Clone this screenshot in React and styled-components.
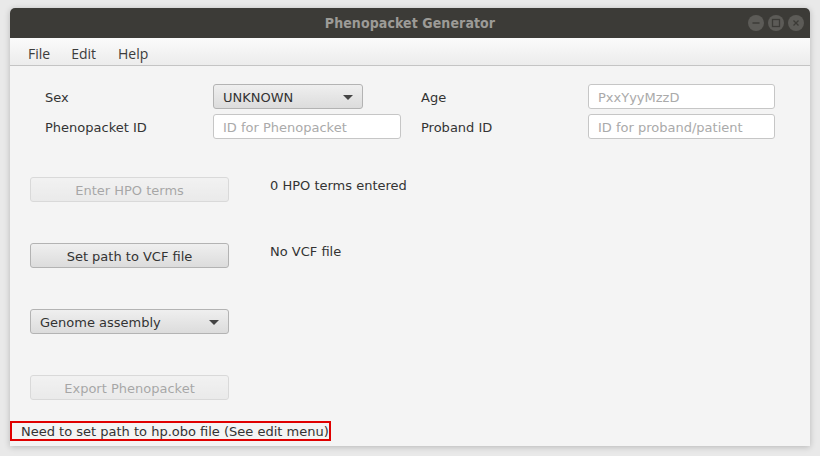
import React from "react";
import styled, { createGlobalStyle } from "styled-components";

const Global = createGlobalStyle`
  html, body { margin: 0; padding: 0; background: #e9e9e9; }
  body { width: 820px; height: 456px; overflow: hidden; font-family: "DejaVu Sans", "Noto Sans", sans-serif; }
`;

const Desktop = styled.div`
  padding: 8px 10px 0 10px;
  height: 456px;
  box-sizing: border-box;
`;

const Window = styled.div`
  width: 800px;
  height: 438px;
  display: flex;
  flex-direction: column;
  background: #f4f4f4;
  border-radius: 5px 5px 0 0;
  box-shadow: 0 1px 6px rgba(0, 0, 0, 0.22);
  overflow: hidden;
`;

const TitleBar = styled.div`
  height: 30px;
  flex: none;
  background: #3c3b37;
  position: relative;
  display: flex;
  align-items: center;
  justify-content: center;
`;

const Title = styled.div`
  font-family: "DejaVu Sans Condensed", "DejaVu Sans", sans-serif;
  font-weight: bold;
  font-size: 14px;
  color: #9d9b97;
  letter-spacing: 0.1px;
`;

const WinButtons = styled.div`
  position: absolute;
  right: 6px;
  top: 7px;
  display: flex;
  gap: 4px;
`;

const WinBtn = styled.div`
  width: 16px;
  height: 16px;
  border-radius: 50%;
  background: #5c5b57;
  display: flex;
  align-items: center;
  justify-content: center;
`;

const MenuBar = styled.div`
  height: 28px;
  flex: none;
  box-sizing: border-box;
  background: linear-gradient(#fbfbfb, #ececec);
  border-bottom: 1px solid #c4c4c4;
  display: flex;
  align-items: center;
  padding: 3px 0 0 18px;
`;

const MenuItem = styled.div`
  font-family: "Open Sans", "DejaVu Sans", sans-serif;
  font-size: 14px;
  color: #3c3c3c;
  margin-right: ${(p) => p.$mr}px;
`;

const Content = styled.div`
  flex: 1;
  display: flex;
  flex-direction: column;
  padding: 18px 0 5px 0;
  color: #333;
  font-size: 13px;
`;

const FormGrid = styled.div`
  display: grid;
  grid-template-columns: 168px 208px 167px 186px;
  grid-auto-rows: 25px;
  row-gap: 5px;
  padding-left: 35px;
  align-items: center;
`;

const Label = styled.div`
  color: #333;
  padding-top: 2px;
`;

const Combo = styled.div`
  width: ${(p) => p.$w}px;
  height: 25px;
  box-sizing: border-box;
  border: 1px solid #b3b3b3;
  border-radius: 3px;
  background: linear-gradient(#efefef, #dcdcdc);
  display: flex;
  align-items: center;
  justify-content: space-between;
  padding: 1px 9px 0 9px;
  color: #333;
`;

const Arrow = styled.div`
  width: 0;
  height: 0;
  border-left: 5px solid transparent;
  border-right: 5px solid transparent;
  border-top: 5px solid #444;
`;

const Field = styled.div`
  width: ${(p) => p.$w}px;
  height: 25px;
  box-sizing: border-box;
  border: 1px solid #c6c6c6;
  border-radius: 3px;
  background: #fff;
  display: flex;
  align-items: center;
  padding: 1px 0 0 9px;
  color: #aaa;
`;

const Actions = styled.div`
  display: flex;
  flex-direction: column;
  gap: 41px;
  padding-left: 20px;
  margin-top: 38px;
`;

const ActionRow = styled.div`
  display: flex;
  align-items: flex-start;
  gap: 41px;
`;

const Button = styled.div`
  width: 199px;
  height: 25px;
  box-sizing: border-box;
  border: 1px solid #b3b3b3;
  border-radius: 3px;
  background: linear-gradient(#efefef, #dcdcdc);
  display: flex;
  align-items: center;
  justify-content: center;
  padding-top: 1px;
  color: #333;
  opacity: ${(p) => (p.$disabled ? 0.4 : 1)};
`;

const Info = styled.div`
  color: #333;
  padding-top: 1px;
  line-height: 15px;
`;

const Spacer = styled.div`
  flex: 1;
`;

const Status = styled.div`
  align-self: flex-start;
  border: 2px solid #e00000;
  height: 20px;
  box-sizing: border-box;
  display: flex;
  align-items: center;
  padding: 0 0 0 9px;
  color: #333;
`;

export default function App() {
  return (
    <>
      <Global />
      <Desktop>
        <Window>
          <TitleBar>
            <Title>Phenopacket Generator</Title>
            <WinButtons>
              <WinBtn>
                <svg width="10" height="10" viewBox="0 0 10 10">
                  <line x1="1.5" y1="5" x2="8.5" y2="5" stroke="#3c3b37" strokeWidth="1.4" />
                </svg>
              </WinBtn>
              <WinBtn>
                <svg width="10" height="10" viewBox="0 0 10 10">
                  <rect x="1.5" y="1.5" width="7" height="7" fill="none" stroke="#3c3b37" strokeWidth="1.3" />
                </svg>
              </WinBtn>
              <WinBtn>
                <svg width="10" height="10" viewBox="0 0 10 10">
                  <path d="M2.5 2.5 L7.5 7.5 M7.5 2.5 L2.5 7.5" stroke="#3c3b37" strokeWidth="1.3" />
                </svg>
              </WinBtn>
            </WinButtons>
          </TitleBar>
          <MenuBar>
            <MenuItem $mr={21}>File</MenuItem>
            <MenuItem $mr={22}>Edit</MenuItem>
            <MenuItem $mr={0}>Help</MenuItem>
          </MenuBar>
          <Content>
            <FormGrid>
              <Label>Sex</Label>
              <Combo $w={150}>
                <span>UNKNOWN</span>
                <Arrow />
              </Combo>
              <Label>Age</Label>
              <Field $w={187}>PxxYyyMzzD</Field>
              <Label>Phenopacket ID</Label>
              <Field $w={188}>ID for Phenopacket</Field>
              <Label>Proband ID</Label>
              <Field $w={187}>ID for proband/patient</Field>
            </FormGrid>
            <Actions>
              <ActionRow>
                <Button $disabled>Enter HPO terms</Button>
                <Info>0 HPO terms entered</Info>
              </ActionRow>
              <ActionRow>
                <Button>Set path to VCF file</Button>
                <Info>No VCF file</Info>
              </ActionRow>
              <ActionRow>
                <Combo $w={199}>
                  <span>Genome assembly</span>
                  <Arrow />
                </Combo>
              </ActionRow>
              <ActionRow>
                <Button $disabled>Export Phenopacket</Button>
              </ActionRow>
            </Actions>
            <Spacer />
            <Status>Need to set path to hp.obo file (See edit menu)</Status>
          </Content>
        </Window>
      </Desktop>
    </>
  );
}
